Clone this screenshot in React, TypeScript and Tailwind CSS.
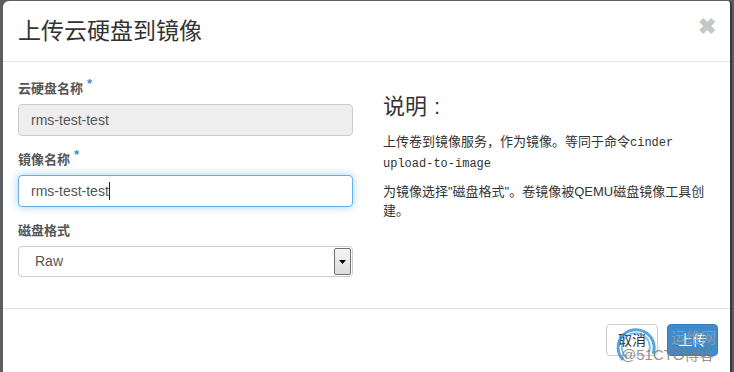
import React from "react";

const sans = { fontFamily: '"Liberation Sans", "Noto Sans CJK SC", sans-serif' };

function Label({ text, star }: { text: string; star?: boolean }) {
  return (
    <div className="h-[20px] leading-[20px] mb-[5px] text-[13px] font-bold text-[#555]">
      {text}
      {star && <span className="text-[#428bca] text-[13px] ml-[4px] relative -top-[5px]">*</span>}
    </div>
  );
}

export default function App() {
  return (
    <div className="w-[734px] h-[372px] bg-[#5e5e5e] pl-[3px] pt-[1px] overflow-hidden" style={sans}>
      <div className="w-[729px] h-[371px] bg-white rounded-tl-[6px] rounded-tr-[4px] border-r-[2px] border-[#3a3a3a] flex flex-col relative">
        {/* header */}
        <div className="h-[61px] border-b border-[#e5e5e5] flex items-center justify-between pl-[15px] pr-[14px]">
          <div className="text-[23px] text-[#333] leading-none">上传云硬盘到镜像</div>
          <div className="text-[22px] font-bold text-[#c6c6c6] leading-none -mt-[9px]">✖</div>
        </div>
        {/* body */}
        <div className="h-[246px] flex pt-[17px] pl-[15px]">
          <div className="w-[335px]">
            <Label text="云硬盘名称" star />
            <div className="h-[32px] rounded-[4px] border border-[#ccc] bg-[#eee] flex items-center pl-[12px] text-[14px] text-[#555] mb-[14px]">
              rms-test-test
            </div>
            <Label text="镜像名称" star />
            <div className="h-[32px] rounded-[4px] border border-[#66afe9] bg-white flex items-center pl-[12px] text-[14px] text-[#555] mb-[14px] shadow-[0_0_8px_rgba(102,175,233,0.6)]">
              rms-test-test<span className="inline-block w-[1px] h-[18px] bg-[#222]"></span>
            </div>
            <Label text="磁盘格式" />
            <div className="h-[31px] rounded-[4px] border border-[#ccc] bg-white flex items-center justify-between pl-[16px] pr-[1px] text-[14px] text-[#555]">
              <span>Raw</span>
              <div className="w-[17px] h-[27px] border border-[#707070] rounded-[2px] bg-gradient-to-b from-[#f6f6f6] to-[#dcdcdc] flex items-center justify-center">
                <svg width="7" height="4" viewBox="0 0 7 4"><path d="M0 0h7L3.5 4z" fill="#000" /></svg>
              </div>
            </div>
          </div>
          <div className="ml-[30px] w-[326px] text-[#333]">
            <div className="text-[22px] leading-[26px] mt-[15px] mb-[12px] flex">
              <span>说明</span>
              <span className="ml-[7px]">:</span>
            </div>
            <p className="text-[13px] leading-[19px]">
              上传卷到镜像服务，作为镜像。等同于命令<span className="text-[12px]" style={{ fontFamily: '"Liberation Mono", monospace' }}>cinder upload-to-image</span>
            </p>
            <p className="text-[13px] leading-[19px] mt-[8px]">
              为镜像选择"磁盘格式"。卷镜像被QEMU磁盘镜像工具创建。
            </p>
          </div>
        </div>
        {/* footer */}
        <div className="flex-1 border-t border-[#e5e5e5] flex justify-end items-start pt-[15px] pr-[12px] gap-[9px]">
          <div className="w-[52px] h-[32px] rounded-[4px] border border-[#ccc] bg-white flex items-center justify-center text-[14px] text-[#333]">取消</div>
          <div className="w-[51px] h-[32px] rounded-[4px] border border-[#357ebd] bg-[#428bca] flex items-center justify-center text-[14px] text-white">上传</div>
        </div>
        {/* watermark */}
        <div className="absolute left-[612px] top-[323px] pointer-events-none">
          <svg width="44" height="44" viewBox="0 0 44 44">
            <path d="M8 36 A18 18 0 1 1 38 30" stroke="#2e8fd8" strokeWidth="3" fill="none" opacity="0.8" />
            <path d="M12 34 A14 14 0 1 1 34 28" stroke="#2e8fd8" strokeWidth="2" fill="none" opacity="0.6" />
          </svg>
        </div>
        <div className="absolute left-[668px] top-[326px] text-[15px] text-[#9aa3ad] opacity-80 pointer-events-none">运维网</div>
        <div className="absolute left-[618px] top-[343px] text-[15px] text-[#7a7a7a] opacity-80 pointer-events-none">@51CTO博客</div>
      </div>
    </div>
  );
}
